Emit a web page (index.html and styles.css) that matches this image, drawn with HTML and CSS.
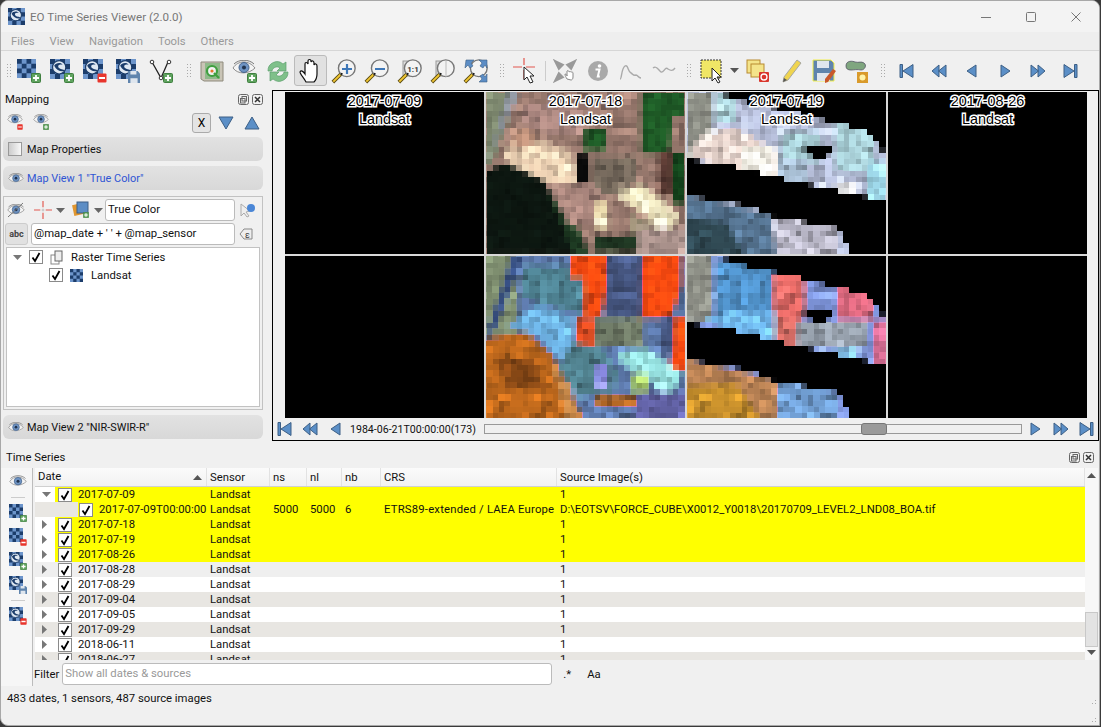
FILE: index.html
```html
<!DOCTYPE html>
<html>
  <head>
    <meta charset="utf-8" />
    <title>EO Time Series Viewer (2.0.0)</title>
    <link rel="stylesheet" href="styles.css">
  </head>
  <body>
    <svg class="defs" width="0" height="0">
      <defs>
        <filter id="px" filterUnits="userSpaceOnUse" x="-10" y="-10" width="219" height="182" color-interpolation-filters="sRGB">
          <feTurbulence type="fractalNoise" baseFrequency=".11" numOctaves="2" seed="4"/>
          <feColorMatrix values=".33 .33 .33 0 0 .33 .33 .33 0 0 .33 .33 .33 0 0 0 0 0 0 1" result="n"/>
          <feComposite in="SourceGraphic" in2="n" operator="arithmetic" k1="2"/>
          <feGaussianBlur stdDeviation="1.800" result="m"/>
          <feFlood x="3" y="3" width="1" height="1" flood-color="#000"/>
          <feComposite width="6" height="6"/>
          <feTile result="a"/>
          <feComposite in="m" in2="a" operator="in"/>
          <feMorphology operator="dilate" radius="3"/>
        </filter>
        <filter id="swath" filterUnits="userSpaceOnUse" x="0" y="0" width="199" height="162">
          <feFlood x="3" y="3" width="1" height="1" flood-color="#000"/>
          <feComposite width="6" height="6"/>
          <feTile result="a"/>
          <feComposite in="SourceGraphic" in2="a" operator="in"/>
          <feMorphology operator="dilate" radius="3"/>
        </filter>

        <symbol id="checker" viewBox="0 0 24 24">
          <rect width="24" height="24" fill="#6d95cb"/>
          <path fill="#1c3d6b" d="M0 0h6v6H0zM12 0h6v6h-6zM6 6h6v6H6zM18 6h6v6h-6zM0 12h6v6H0zM12 12h6v6h-6zM6 18h6v6H6zM18 18h6v6h-6z"/>
        </symbol>
        <symbol id="plus" viewBox="0 0 10 10">
          <rect x=".5" y=".5" width="9" height="9" rx="1" fill="#5fa35f" stroke="#3f7f3f"/>
          <path d="M5 2v6M2 5h6" stroke="#fff" stroke-width="1.8"/>
        </symbol>
        <symbol id="minus" viewBox="0 0 10 10">
          <rect x=".5" y=".5" width="9" height="9" rx="1" fill="#e8352c"/>
          <path d="M2 5h6" stroke="#fff" stroke-width="2"/>
        </symbol>
        <symbol id="floppy" viewBox="0 0 10 10">
          <path d="M0 0h8l2 2v8H0z" fill="#5f84ad"/>
          <path d="M2 0h5v3H2zM2 6h6v4H2z" fill="#dfe6ee"/>
        </symbol>
        <symbol id="ts" viewBox="0 0 24 24">
          <use href="#checker" width="24" height="24"/>
          <circle cx="11" cy="10" r="8" fill="#dfe8f2" stroke="#1c3d6b" stroke-width="1.5"/>
          <path d="M5 8c2-4 9-4 10-1-3-1-6 0-5 3 2 3 6 2 8 4-4 2-10 0-13-6z" fill="#1c3d6b"/>
        </symbol>
        <symbol id="eye" viewBox="0 0 24 16">
          <path d="M1 8c5-8 16-8 22 0-6 6-17 7-22 0z" fill="#f4f4f4" stroke="#8b8b8b"/>
          <circle cx="12" cy="7.500" r="5" fill="#6f94c4" stroke="#46648c"/>
          <circle cx="12" cy="7.500" r="2" fill="#22344e"/>
          <path d="M2 4C7-1 17-1 22 4" fill="none" stroke="#777"/>
        </symbol>
        <symbol id="mag" viewBox="0 0 28 28">
          <path d="M2 26l9-9" stroke="#5a4a10" stroke-width="4"/>
          <path d="M2.500 25.500l8-8" stroke="#f2c733" stroke-width="2"/>
          <circle cx="17" cy="11" r="9" fill="#f3f3f3" stroke="#777" stroke-width="1.500"/>
          <path d="M10 19l1-3 2 1z" fill="#111"/>
        </symbol>
        <symbol id="first" viewBox="0 0 16 16">
          <path d="M2 1.500h2.500v13H2zM15 1.500v13L5 8z" fill="#5b8fc7" stroke="#3d5f85" stroke-linejoin="round"/>
        </symbol>
        <symbol id="rew" viewBox="0 0 16 16">
          <path d="M8 2v12L1 8zM15 2v12L7.500 8z" fill="#5b8fc7" stroke="#3d5f85" stroke-linejoin="round"/>
        </symbol>
        <symbol id="prev" viewBox="0 0 16 16">
          <path d="M12 2v12L3 8z" fill="#5b8fc7" stroke="#3d5f85" stroke-linejoin="round"/>
        </symbol>
        <symbol id="next" viewBox="0 0 16 16">
          <path d="M4 2v12l9-6z" fill="#5b8fc7" stroke="#3d5f85" stroke-linejoin="round"/>
        </symbol>
        <symbol id="ffw" viewBox="0 0 16 16">
          <path d="M8 2v12l7-6zM1 2v12l7.500-6z" fill="#5b8fc7" stroke="#3d5f85" stroke-linejoin="round"/>
        </symbol>
        <symbol id="last" viewBox="0 0 16 16">
          <path d="M11.500 1.500H14v13h-2.500zM1 1.500v13L11 8z" fill="#5b8fc7" stroke="#3d5f85" stroke-linejoin="round"/>
        </symbol>
        <symbol id="check" viewBox="0 0 14 14">
          <rect x=".5" y=".5" width="13" height="13" fill="#fff" stroke="#8a8a8a"/>
          <path d="M3.500 7.500l2.500 3.500 4.500-8" fill="none" stroke="#000" stroke-width="1.800"/>
        </symbol>
        <symbol id="float" viewBox="0 0 11 11">
          <rect x=".5" y=".5" width="10" height="10" rx="2" fill="#f0f0f0" stroke="#666"/>
          <rect x="4" y="2.500" width="4.500" height="4.500" fill="none" stroke="#666"/>
          <rect x="2.500" y="4.500" width="4.500" height="4.500" fill="none" stroke="#666"/>
        </symbol>
        <symbol id="close" viewBox="0 0 11 11">
          <rect x=".5" y=".5" width="10" height="10" rx="2" fill="#f0f0f0" stroke="#666"/>
          <path d="M3 3l5 5M8 3l-5 5" stroke="#333" stroke-width="1.500"/>
        </symbol>
        <symbol id="cross" viewBox="0 0 20 20">
          <path d="M0 10h7M13 10h7M10 0v7M10 13v7" stroke="#e2564e" stroke-width="1.300"/>
          <path d="M8.500 10h3M10 8.500v3" stroke="#bbb"/>
        </symbol>
      </defs>
    </svg>

    <div class="window">
      <div class="titlebar">
        <svg class="app-icon" width="17" height="17"><use href="#ts" width="17" height="17"/></svg>
        <span class="app-title">EO Time Series Viewer (2.0.0)</span>
        <div class="win-controls">
          <svg width="12" height="12"><path d="M1 6.500h10" stroke="#777"/></svg>
          <svg width="12" height="12"><rect x="1.500" y="1.500" width="9" height="9" rx="1" fill="none" stroke="#777"/></svg>
          <svg width="12" height="12"><path d="M1.500 1.500l9 9M10.500 1.500l-9 9" stroke="#777"/></svg>
        </div>
      </div>

      <div class="menubar">
        <span>Files</span><span>View</span><span>Navigation</span><span>Tools</span><span>Others</span>
      </div>

      <div class="toolbar">
        <i class="grip first-grip"></i>
        <button class="tool"><svg width="26" height="26"><use href="#checker" x="1" y="1" width="19" height="19"/><use href="#plus" x="15" y="15" width="10" height="10"/></svg></button>
        <button class="tool"><svg width="26" height="26"><use href="#ts" x="1" y="1" width="20" height="20"/><use href="#plus" x="15" y="15" width="10" height="10"/></svg></button>
        <button class="tool"><svg width="26" height="26"><use href="#ts" x="1" y="1" width="20" height="20"/><use href="#minus" x="15" y="15" width="10" height="10"/></svg></button>
        <button class="tool"><svg width="26" height="26"><use href="#ts" x="1" y="1" width="20" height="20"/><use href="#floppy" x="13" y="13" width="12" height="12"/></svg></button>
        <button class="tool"><svg width="26" height="26"><path d="M4 4l9 16 7-16" fill="none" stroke="#222" stroke-width="1.300"/><circle cx="4" cy="4" r="1.800" fill="#fff" stroke="#333"/><circle cx="21" cy="4" r="1.800" fill="#fff" stroke="#333"/><circle cx="13" cy="20" r="1.800" fill="#fff" stroke="#333"/><use href="#plus" x="15" y="15" width="10" height="10"/></svg></button>
        <i class="grip qgis-grip"></i>
        <button class="tool"><svg width="26" height="26"><path d="M2 4h22v19H5l-3-2z" fill="#c9c4b6" stroke="#8e8a7c"/><rect x="6" y="5" width="15" height="16" fill="#8fb98a"/><circle cx="13" cy="13" r="5" fill="#f2f2f2" stroke="#3f9f3f" stroke-width="2.200"/><circle cx="13" cy="13" r="1.600" fill="#e5772b"/><path d="M15 15l5 5" stroke="#3f9f3f" stroke-width="2.200"/></svg></button>
        <button class="tool"><svg width="26" height="26"><use href="#eye" x="0" y="2" width="24" height="16"/><use href="#plus" x="15" y="15" width="10" height="10"/></svg></button>
        <button class="tool"><svg width="26" height="26"><path d="M3 13a9 9 0 0 1 15-7l3-2v9h-9l3-3a5 5 0 0 0-8 3z" fill="#7fc08a" stroke="#5d9f6d" stroke-width=".7"/><path d="M23 14a9 9 0 0 1-15 7l-3 2v-9h9l-3 3a5 5 0 0 0 8-3z" fill="#7fc08a" stroke="#5d9f6d" stroke-width=".7"/></svg></button>
        <button class="tool active"><svg width="26" height="26"><path d="M8 24c-2-4-6-8-6-10 1-2 3-1 5 2V6c0-2 2-2 3 0V3c0-2 3-2 3 0v1c1-2 3-1 3 1v2c1-2 3-1 3 1v8c0 4-1 6-3 8z" fill="#fff" stroke="#111" stroke-width="1.200"/></svg></button>
        <button class="tool"><svg width="26" height="26"><use href="#mag" width="26" height="26"/><path d="M16 6v10M11 11h10" stroke="#3f78b8" stroke-width="2.200"/></svg></button>
        <button class="tool"><svg width="26" height="26"><use href="#mag" width="26" height="26"/><path d="M11 11h10" stroke="#3f78b8" stroke-width="2.200"/></svg></button>
        <button class="tool"><svg width="26" height="26"><rect x="6" y="3" width="13" height="15" fill="#ddd" stroke="#999"/><use href="#mag" width="26" height="26"/><text x="16" y="14" class="one-one">1:1</text></svg></button>
        <button class="tool"><svg width="26" height="26"><rect x="6" y="3" width="13" height="15" fill="#ddd" stroke="#999"/><use href="#mag" width="26" height="26"/><path d="M16 3v16" stroke="#bbb"/></svg></button>
        <button class="tool"><svg width="26" height="26"><use href="#mag" width="26" height="26"/><path d="M3 2h8L8 5l2 3-3 2-2-3-3 3zM24 2h-8l3 3-2 3 3 2 2-3 2 3zM24 24h-8l3-3-2-3 3-2 2 3 2-3z" fill="#5c8dc5" stroke="#3d5f85" stroke-width=".6"/></svg></button>
        <i class="grip select-grip"></i>
        <button class="tool"><svg width="26" height="26"><path d="M1 9h9M14 9h9M12 0v7M12 12v9" stroke="#e2564e" stroke-width="1.200"/><path d="M12 9v13l3-3 3 6 3-1-3-6h4z" fill="#fff" stroke="#222"/></svg></button>
        <i class="divider"></i>
        <button class="tool"><svg width="24" height="24"><path d="M3 3l6 3-3 3zM21 3l-6 3 3 3zM3 21l6-3-3-3z" fill="#999" stroke="#999" stroke-width="3"/><path d="M14 20c-1-2-2-3-2-5 1 0 2 1 2 2v-5c1-1 2 0 2 1 1-1 2 0 2 0 1 0 2 0 2 1v4c0 2-1 3-2 3z" fill="#fff" stroke="#888"/></svg></button>
        <button class="tool"><svg width="22" height="22"><circle cx="11" cy="11" r="10" fill="#a9a9a9"/><circle cx="12.500" cy="6" r="1.800" fill="#fff"/><path d="M8.500 9.500h4l-1.700 7h2" fill="none" stroke="#fff" stroke-width="2"/></svg></button>
        <button class="tool"><svg width="24" height="20"><path d="M1 18c2 0 1-10 5-13 3-2 3 6 6 7 2 1 2 3 5 2 2 0 2 3 5 3" fill="none" stroke="#aaa" stroke-width="1.400"/></svg></button>
        <button class="tool"><svg width="24" height="14"><path d="M1 4c4-3 5 2 8 4 3 1 4-6 7-3 3 2 5 2 7-1" fill="none" stroke="#aaa" stroke-width="1.400"/></svg></button>
        <i class="grip feature-grip"></i>
        <button class="tool"><svg width="26" height="26"><rect x="2" y="2" width="20" height="18" fill="#f0e666" stroke="#333" stroke-dasharray="2 1"/><path d="M13 10v13l3-3 3 5 2-1-3-5h4z" fill="#fff" stroke="#222"/></svg></button>
        <button class="dropdown"><svg width="9" height="5"><path d="M0 0h9L4.500 5z" fill="#555"/></svg></button>
        <button class="tool"><svg width="26" height="26"><rect x="2" y="2" width="13" height="13" fill="#f4e48a" stroke="#b88a30"/><rect x="6" y="6" width="13" height="13" fill="#f4e48a" stroke="#b88a30"/><rect x="14" y="14" width="10" height="10" rx="1" fill="#d9362c"/><circle cx="19" cy="19" r="3" fill="none" stroke="#fff" stroke-width="1.300"/></svg></button>
        <button class="tool"><svg width="26" height="26"><path d="M19 2l4 3-13 17-5 2 1-5z" fill="#efd44f" stroke="#a8a8a0"/><path d="M5 24l1-4 3 2z" fill="#555"/></svg></button>
        <button class="tool"><svg width="26" height="26"><path d="M2 2h18l3 3v18H2z" fill="#5f84ad" stroke="#f2ee4a"/><path d="M6 3h12v7H6zM6 15h13v8H6z" fill="#dfe6ee"/><path d="M22 11l3 2-8 11-3 1 0-4z" fill="#c9582b"/></svg></button>
        <button class="tool"><svg width="26" height="26"><path d="M2 8c0-6 7-5 9-4 4 1 6-1 9 1 3 2 1 7-3 7-4-1-7 0-10 0-3 0-5-1-5-4z" fill="#7fa67f" stroke="#556" stroke-width=".8"/><rect x="13" y="14" width="11" height="11" fill="#d99a2b"/><circle cx="18.500" cy="19.500" r="3" fill="#fff3a8"/></svg></button>
        <i class="grip nav-grip"></i>
        <button class="tool"><svg width="16" height="16"><use href="#first" width="16" height="16"/></svg></button>
        <button class="tool"><svg width="16" height="16"><use href="#rew" width="16" height="16"/></svg></button>
        <button class="tool"><svg width="16" height="16"><use href="#prev" width="16" height="16"/></svg></button>
        <button class="tool"><svg width="16" height="16"><use href="#next" width="16" height="16"/></svg></button>
        <button class="tool"><svg width="16" height="16"><use href="#ffw" width="16" height="16"/></svg></button>
        <button class="tool"><svg width="16" height="16"><use href="#last" width="16" height="16"/></svg></button>
      </div>

      <div class="upper">
        <div class="mapping">
          <div class="dock-title">
            <span>Mapping</span>
            <span class="dock-btns">
              <svg width="11" height="11"><use href="#float" width="11" height="11"/></svg>
              <svg width="11" height="11"><use href="#close" width="11" height="11"/></svg>
            </span>
          </div>
          <div class="mapping-tools">
            <svg class="mini" width="20" height="20"><use href="#eye" x="1" y="1" width="16" height="11"/><use href="#minus" x="11" y="11" width="6" height="6"/></svg>
            <svg class="mini second" width="20" height="20"><use href="#eye" x="1" y="1" width="16" height="11"/><use href="#plus" x="11" y="11" width="6" height="6"/></svg>
            <button class="x-btn">X</button>
            <svg width="16" height="14"><path d="M1 1h14L8 13z" fill="#5b8fc7" stroke="#3d5f85"/></svg>
            <svg width="16" height="14"><path d="M1 13h14L8 1z" fill="#5b8fc7" stroke="#3d5f85"/></svg>
          </div>

          <div class="section">
            <i class="section-box"></i>
            <span>Map Properties</span>
          </div>
          <div class="section">
            <svg width="16" height="11"><use href="#eye" width="16" height="11"/></svg>
            <span class="section-link">Map View 1 "True Color"</span>
          </div>

          <div class="view-frame">
            <div class="view-row">
              <svg width="18" height="16"><use href="#eye" y="2" width="18" height="12"/><path d="M1 15L16 1" stroke="#777"/></svg>
              <svg class="row-cross" width="18" height="18"><use href="#cross" width="18" height="18"/></svg>
              <svg width="9" height="5"><path d="M0 0h9L4.500 5z" fill="#666"/></svg>
              <svg class="row-layers" width="18" height="18"><rect x="1" y="3" width="10" height="11" fill="#e0962f" transform="rotate(-12 6 8)"/><rect x="5" y="1" width="11" height="11" fill="#5c8dc5" stroke="#3d5f85"/><use href="#plus" x="11" y="11" width="6" height="6"/></svg>
              <svg width="9" height="5"><path d="M0 0h9L4.500 5z" fill="#666"/></svg>
              <div class="line-input name-input">True Color</div>
              <svg class="row-end" width="16" height="16"><path d="M1 2v12l3-3 3 4 2-1-3-4 4-1z" fill="#eee" stroke="#aaa"/><circle cx="11" cy="6" r="4" fill="#4a86d6"/></svg>
            </div>
            <div class="view-row">
              <button class="abc">abc</button>
              <div class="line-input expr-input">@map_date + ' ' + @map_sensor</div>
              <svg class="row-end expr-end" width="14" height="14"><path d="M1 7l4-5h8v10H5z" fill="#eee" stroke="#888"/><text x="6" y="11" class="epsilon">ε</text></svg>
            </div>
            <div class="layer-tree">
              <div class="tree-row">
                <svg class="arrow" width="9" height="5"><path d="M0 0h9L4.500 5z" fill="#777"/></svg>
                <svg width="14" height="14"><use href="#check" width="14" height="14"/></svg>
                <svg class="tree-icon" width="15" height="15"><rect x="1" y="5" width="8" height="9" fill="none" stroke="#888"/><rect x="5" y="1" width="7" height="10" fill="#eee" stroke="#666"/></svg>
                <span>Raster Time Series</span>
              </div>
              <div class="tree-row sub">
                <svg width="14" height="14"><use href="#check" width="14" height="14"/></svg>
                <svg class="tree-icon" width="13" height="13"><use href="#checker" width="13" height="13"/></svg>
                <span>Landsat</span>
              </div>
            </div>
          </div>

          <div class="section">
            <svg width="16" height="11"><use href="#eye" width="16" height="11"/></svg>
            <span>Map View 2 "NIR-SWIR-R"</span>
          </div>
        </div>

        <div class="maps">
          <div class="map-grid">
            <div class="map-cell">
              <div class="map-label">2017-07-09<br>Landsat</div>
            </div>
            <div class="map-cell">
              <svg width="199" height="162">
                <g filter="url(#px)">
                  <rect x="-10" y="-10" width="219" height="182" fill="#96776c"/>
                  <path fill="#7f8a70" d="M0 0h22v30L6 72H0z"/>
                  <path fill="#8f96a0" d="M22 0h12L12 45 2 72z"/>
                  <path fill="#a6837c" d="M38 12h60v30H62L36 30z"/>
                  <path fill="#0c1610" d="M0 78l20-7 35 14 15 20 12 20 8 37H0z"/>
                  <path fill="#1d3a22" d="M62 100l16 6 10 20 16 36H88z"/>
                  <path fill="#efd2b4" d="M18 62l14-22 26 10 28 10 4 34H72L26 74z"/>
                  <path fill="#c5967e" d="M26 40l16-4 12 14-26 8z"/>
                  <path fill="#1e5a26" d="M155 0h44v24h-12l-4 38h-28zM98 36h22v22H98z"/>
                  <path fill="#12401a" d="M186 60h13v52h-13z"/>
                  <path fill="#5b3b34" d="M172 60h14v44h-14z"/>
                  <path fill="#0a0a0a" d="M90 62h14v30H90z"/>
                  <path fill="#75695c" d="M106 64h46v24l-22 16h-24z"/>
                  <path fill="#a9857c" d="M60 92h46l24 26-10 16H84z"/>
                  <path fill="#fff3c8" d="M134 100l22-8 36 32-8 18-10 4-12-22-28-18z"/>
                  <path fill="#f7e4b4" d="M110 110h12v26h-12z"/>
                  <path fill="#b0a487" d="M146 122l20 10-4 20h-16z"/>
                  <path fill="#1d3320" d="M108 144h44v16h-44z"/>
                  <path fill="#a8908a" d="M152 136h47v26h-47z"/>
                </g>
              </svg>
              <div class="map-label">2017-07-18<br>Landsat</div>
            </div>
            <div class="map-cell">
              <svg width="199" height="162">
                <g filter="url(#px)">
                  <rect x="-10" y="-10" width="219" height="182" fill="#b3bbd6"/>
                  <path fill="#8f9188" d="M0 0h26v66H0z"/>
                  <path fill="#a9d0d8" d="M28 0h20v30H28zM94 40h40v30H94zM148 30h40v50h-40z"/>
                  <path fill="#e9d5cd" d="M20 40l30-4 40 24 4 30-60-14-34-14z"/>
                  <path fill="#fbf6ea" d="M54 54h34v30H54z"/>
                  <path fill="#a7bdd2" d="M90 66h30v24H90z"/>
                  <path fill="#fff" d="M148 92h22v10h-22z"/>
                  <path fill="#9dd6e8" d="M180 70h19v40h-19z"/>
                  <path fill="#54728f" d="M-10 100l100 24 60 12v36H-10z"/>
                  <path fill="#2e4650" d="M-10 125l50 5 22 42H-10z"/>
                  <path fill="#b8b6c6" d="M84 120l30 4 36 10v38h-60z"/>
                </g>
                <g filter="url(#swath)">
                  <path d="M28 0l32 10 40 8 46 12 31 7 13 13 9 13V0zM0 68l40 5 45 12 60 13 54 12v52h-36l-8-25-17-4-48-8-30-12-60-10zM115 58l30-6-5 13h-12l-13-5z"/>
                </g>
              </svg>
              <div class="map-label">2017-07-19<br>Landsat</div>
            </div>
            <div class="map-cell">
              <div class="map-label">2017-08-26<br>Landsat</div>
            </div>

            <div class="map-cell"></div>
            <div class="map-cell">
              <svg width="199" height="162">
                <g filter="url(#px)">
                  <rect x="-10" y="-10" width="219" height="182" fill="#5b77a8"/>
                  <path fill="#7f8f70" d="M-10-10h42v88H-10z"/>
                  <path fill="#354d80" d="M26 0h12L10 72 0 78z"/>
                  <path fill="#4d8090" d="M36 10h60l6 50-44-12-22-8z"/>
                  <path fill="#6db1e2" d="M52 48l36 14-2 38H70L54 80 22 70z"/>
                  <path fill="#b9651b" d="M-10 84l50-8 25 22 10 17 26 57H-10z"/>
                  <path fill="#8b4a16" d="M10 100l40 4 10 30H20z"/>
                  <path fill="#c98a4a" d="M64 104l18 20 12 38H80z"/>
                  <path fill="#ff4a10" d="M86-10h34v40l-4 30H98V22H84zM158-10h37v40l-10 32h-32l2-36z"/>
                  <path fill="#dc4a20" d="M90 62h18v28H90z"/>
                  <path fill="#ff4a10" d="M188 62h21v54l-26-4 4-18z"/>
                  <path fill="#45557f" d="M120-10h36v70h-36zM176 60h12v34h-12z"/>
                  <path fill="#4f7f8c" d="M86 86l30 6 16 24-4 20-36 6-20-30z"/>
                  <path fill="#6f7a66" d="M108 62h50v28h-50z"/>
                  <path fill="#9ae7e6" d="M132 96l28-4 36 26-14 28-18-22-28-16z"/>
                  <path fill="#8d8de8" d="M110 108h12v26h-12z"/>
                  <path fill="#a9cf6a" d="M146 118h16v18h-16z"/>
                  <path fill="#5f5fa0" d="M148 136h61v36h-61z"/>
                  <path fill="#b86820" d="M110 140h40v10h-40z"/>
                </g>
              </svg>
            </div>
            <div class="map-cell">
              <svg width="199" height="162">
                <g filter="url(#px)">
                  <rect x="-10" y="-10" width="219" height="182" fill="#7f96dd"/>
                  <path fill="#8f9188" d="M-10-10h36v76h-36z"/>
                  <path fill="#4f8fc6" d="M28 4h60v56H28z"/>
                  <path fill="#e56a66" d="M86 18h32v44l-16 8H86z"/>
                  <path fill="#df6a80" d="M150 30h36v34h-36z"/>
                  <path fill="#71baf4" d="M40 56h48v30l-40-10-30-12z"/>
                  <path fill="#d06a62" d="M88 64h24v26H88z"/>
                  <path fill="#96a0ac" d="M110 66h70v26h-70z"/>
                  <path fill="#cf6a8f" d="M186 64h23v46h-23z"/>
                  <path fill="#88c8f8" d="M148 92h22v12h-22z"/>
                  <path fill="#b57f52" d="M-10 100l100 24v48H-10z"/>
                  <path fill="#c08a2a" d="M-10 130l60-2 30 44H-10z"/>
                  <path fill="#6f9cd0" d="M90 124l60 12v36H90z"/>
                </g>
                <g filter="url(#swath)">
                  <path d="M28 0l32 10 40 8 46 12 31 7 13 13 9 13V0zM0 68l40 5 45 12 60 13 54 12v52h-36l-8-25-17-4-48-8-30-12-60-10zM115 58l30-6-5 13h-12l-13-5z"/>
                </g>
              </svg>
            </div>
            <div class="map-cell"></div>
          </div>
          <div class="map-nav">
            <svg width="16" height="16"><use href="#first" width="16" height="16"/></svg>
            <svg width="16" height="16"><use href="#rew" width="16" height="16"/></svg>
            <svg width="16" height="16"><use href="#prev" width="16" height="16"/></svg>
            <span class="nav-date">1984-06-21T00:00:00(173)</span>
            <div class="slider"><i class="slider-thumb"></i></div>
            <svg class="nav-next" width="16" height="16"><use href="#next" width="16" height="16"/></svg>
            <svg width="16" height="16"><use href="#ffw" width="16" height="16"/></svg>
            <svg width="16" height="16"><use href="#last" width="16" height="16"/></svg>
          </div>
        </div>
      </div>

      <div class="lower">
        <div class="dock-title ts-title">
          <span>Time Series</span>
          <span class="dock-btns">
            <svg width="11" height="11"><use href="#float" width="11" height="11"/></svg>
            <svg width="11" height="11"><use href="#close" width="11" height="11"/></svg>
          </span>
        </div>
        <div class="ts-body">
          <div class="ts-tools">
            <svg width="18" height="13"><use href="#eye" width="18" height="13"/></svg>
            <hr class="first-rule">
            <svg width="18" height="18"><use href="#checker" width="14" height="14"/><use href="#plus" x="11" y="11" width="7" height="7"/></svg>
            <svg width="18" height="18"><use href="#checker" width="14" height="14"/><use href="#minus" x="11" y="11" width="7" height="7"/></svg>
            <svg width="18" height="18"><use href="#ts" width="14" height="14"/><use href="#plus" x="11" y="11" width="7" height="7"/></svg>
            <svg width="18" height="18"><use href="#ts" width="14" height="14"/><use href="#floppy" x="10" y="10" width="8" height="8"/></svg>
            <hr>
            <svg width="18" height="18"><use href="#ts" width="14" height="14"/><use href="#minus" x="11" y="11" width="7" height="7"/></svg>
          </div>
          <div class="ts-main">
            <div class="table-wrap">
              <div class="table">
                <div class="row head">
                  <div class="date-head">Date<svg width="9" height="5"><path d="M0 5h9L4.500 0z" fill="#555"/></svg></div>
                  <div>Sensor</div><div>ns</div><div>nl</div><div>nb</div><div>CRS</div><div>Source Image(s)</div>
                </div>
                <div class="row hit">
                  <div class="date"><svg class="arrow" width="9" height="5"><path d="M0 0h9L4.500 5z" fill="#777"/></svg><svg width="14" height="14"><use href="#check" width="14" height="14"/></svg><span>2017-07-09</span></div>
                  <div>Landsat</div><div></div><div></div><div></div><div></div><div>1</div>
                </div>
                <div class="row hit child">
                  <div class="date"><svg width="14" height="14"><use href="#check" width="14" height="14"/></svg><span>2017-07-09T00:00:00</span></div>
                  <div>Landsat</div><div>5000</div><div>5000</div><div>6</div><div class="crs">ETRS89-extended / LAEA Europe</div><div>D:\EOTSV\FORCE_CUBE\X0012_Y0018\20170709_LEVEL2_LND08_BOA.tif</div>
                </div>
                <div class="row hit">
                  <div class="date"><svg class="arrow" width="5" height="9"><path d="M0 0v9l5-4.500z" fill="#777"/></svg><svg width="14" height="14"><use href="#check" width="14" height="14"/></svg><span>2017-07-18</span></div>
                  <div>Landsat</div><div></div><div></div><div></div><div></div><div>1</div>
                </div>
                <div class="row hit">
                  <div class="date"><svg class="arrow" width="5" height="9"><path d="M0 0v9l5-4.500z" fill="#777"/></svg><svg width="14" height="14"><use href="#check" width="14" height="14"/></svg><span>2017-07-19</span></div>
                  <div>Landsat</div><div></div><div></div><div></div><div></div><div>1</div>
                </div>
                <div class="row hit">
                  <div class="date"><svg class="arrow" width="5" height="9"><path d="M0 0v9l5-4.500z" fill="#777"/></svg><svg width="14" height="14"><use href="#check" width="14" height="14"/></svg><span>2017-08-26</span></div>
                  <div>Landsat</div><div></div><div></div><div></div><div></div><div>1</div>
                </div>
                <div class="row pale">
                  <div class="date"><svg class="arrow" width="5" height="9"><path d="M0 0v9l5-4.500z" fill="#777"/></svg><svg width="14" height="14"><use href="#check" width="14" height="14"/></svg><span>2017-08-28</span></div>
                  <div>Landsat</div><div></div><div></div><div></div><div></div><div>1</div>
                </div>
                <div class="row">
                  <div class="date"><svg class="arrow" width="5" height="9"><path d="M0 0v9l5-4.500z" fill="#777"/></svg><svg width="14" height="14"><use href="#check" width="14" height="14"/></svg><span>2017-08-29</span></div>
                  <div>Landsat</div><div></div><div></div><div></div><div></div><div>1</div>
                </div>
                <div class="row alt">
                  <div class="date"><svg class="arrow" width="5" height="9"><path d="M0 0v9l5-4.500z" fill="#777"/></svg><svg width="14" height="14"><use href="#check" width="14" height="14"/></svg><span>2017-09-04</span></div>
                  <div>Landsat</div><div></div><div></div><div></div><div></div><div>1</div>
                </div>
                <div class="row">
                  <div class="date"><svg class="arrow" width="5" height="9"><path d="M0 0v9l5-4.500z" fill="#777"/></svg><svg width="14" height="14"><use href="#check" width="14" height="14"/></svg><span>2017-09-05</span></div>
                  <div>Landsat</div><div></div><div></div><div></div><div></div><div>1</div>
                </div>
                <div class="row alt">
                  <div class="date"><svg class="arrow" width="5" height="9"><path d="M0 0v9l5-4.500z" fill="#777"/></svg><svg width="14" height="14"><use href="#check" width="14" height="14"/></svg><span>2017-09-29</span></div>
                  <div>Landsat</div><div></div><div></div><div></div><div></div><div>1</div>
                </div>
                <div class="row">
                  <div class="date"><svg class="arrow" width="5" height="9"><path d="M0 0v9l5-4.500z" fill="#777"/></svg><svg width="14" height="14"><use href="#check" width="14" height="14"/></svg><span>2018-06-11</span></div>
                  <div>Landsat</div><div></div><div></div><div></div><div></div><div>1</div>
                </div>
                <div class="row alt">
                  <div class="date"><svg class="arrow" width="5" height="9"><path d="M0 0v9l5-4.500z" fill="#777"/></svg><svg width="14" height="14"><use href="#check" width="14" height="14"/></svg><span>2018-06-27</span></div>
                  <div>Landsat</div><div></div><div></div><div></div><div></div><div>1</div>
                </div>
              </div>
              <div class="scrollbar">
                <svg width="9" height="5"><path d="M0 5h9L4.500 0z" fill="#555"/></svg>
                <div class="scroll-track"><i class="scroll-thumb"></i></div>
                <svg width="9" height="5"><path d="M0 0h9L4.500 5z" fill="#555"/></svg>
              </div>
            </div>
            <div class="filter-row">
              <span>Filter</span>
              <div class="line-input filter-input">Show all dates &amp; sources</div>
              <span class="regex">.*</span>
              <span class="case">Aa</span>
            </div>
          </div>
        </div>
        <div class="statusbar">
          <span>483 dates, 1 sensors, 487 source images</span>
          <div class="size-grips"><i></i><i></i></div>
        </div>
      </div>
    </div>
  </body>
</html>
```

FILE: styles.css
```css
* {
  box-sizing: border-box;
  font-family: "Roboto", "Liberation Sans", sans-serif;
}
html,
body {
  margin: 0;
  height: 100%;
  overflow: hidden;
  background-color: #3a3a3a;
}
svg {
  display: block;
  flex: none;
}
.defs {
  position: absolute;
}
button {
  padding: 0;
  margin: 0;
  border: none;
  background: none;
}
.window {
  display: flex;
  flex-direction: column;
  width: 1100px;
  height: 726px;
  background-color: #f0f0f0;
  border: 1px solid #a8a8a8;
  border-top-left-radius: 8px;
  border-top-right-radius: 8px;
  border-bottom-left-radius: 8px;
  font-size: 11.3px;
  color: #111;
  overflow: hidden;
}

/* title and menu */
.titlebar {
  display: flex;
  align-items: center;
  height: 31px;
  padding-left: 7px;
  background-color: #f3f3f3;
}
.app-title {
  margin-left: 5px;
  color: #777;
  font-size: 11.6px;
}
.win-controls {
  display: flex;
  gap: 33px;
  margin-left: auto;
  padding-right: 17px;
}
.menubar {
  display: flex;
  align-items: center;
  gap: 15px;
  height: 18px;
  padding-left: 10px;
  background-color: #eeeeee;
  color: #999;
}

/* main toolbar */
.toolbar {
  display: flex;
  align-items: center;
  height: 40px;
  padding-left: 5px;
  background-color: #f0f0f0;
  border-top: 1px solid #d6d6d6;
}
.tool {
  display: flex;
  align-items: center;
  justify-content: center;
  flex: none;
  width: 33px;
  height: 31px;
}
.tool.active {
  background-color: #e1e1e1;
  border: 1px solid #bbb;
  border-radius: 3px;
}
.dropdown {
  display: flex;
  align-items: center;
  justify-content: center;
  width: 13px;
  height: 31px;
}
.grip {
  flex: none;
  width: 6px;
  height: 16px;
  background-image: radial-gradient(#aaa 40%, transparent 45%);
  background-size: 3px 3px;
  margin-right: 3px;
}
.first-grip {
  margin-right: 0;
}
.qgis-grip {
  margin-left: 9px;
}
.select-grip {
  margin-left: 7px;
}
.feature-grip {
  margin-left: 6px;
}
.nav-grip {
  margin-left: 7px;
}
.divider {
  flex: none;
  width: 1px;
  height: 20px;
  margin-left: 4px;
  margin-right: 2px;
  background-color: #ccc;
}
.one-one {
  font-size: 8px;
  font-weight: bold;
  text-anchor: middle;
  fill: #333;
}

/* upper half */
.upper {
  display: flex;
  flex: none;
  height: 351px;
}
.mapping {
  display: flex;
  flex: none;
  flex-direction: column;
  width: 271px;
  padding-left: 2px;
}
.dock-title {
  display: flex;
  flex: none;
  align-items: center;
  justify-content: space-between;
  height: 19px;
  padding: 0 3px 0 2px;
  margin-right: 6px;
}
.dock-btns {
  display: flex;
  gap: 3px;
}
.mapping-tools {
  display: flex;
  flex: none;
  align-items: center;
  height: 27px;
  padding-left: 3px;
  margin-right: 8px;
}
.mini {
  margin-right: 6px;
}
.second {
  margin-right: 140px;
}
.x-btn {
  width: 19px;
  height: 20px;
  margin-right: 7px;
  border: 1px solid #aaa;
  border-radius: 3px;
  background-color: #e4e4e4;
  font-size: 12px;
}
.mapping-tools svg:last-child {
  margin-left: 10px;
}
.section {
  display: flex;
  flex: none;
  align-items: center;
  gap: 3px;
  height: 24px;
  width: 260px;
  padding-left: 5px;
  margin-top: 1px;
  margin-bottom: 4px;
  border-radius: 6px;
  background: linear-gradient(#e2e2e2, #d8d8d8);
  font-size: 10.9px;
}
.section-box {
  flex: none;
  width: 14px;
  height: 14px;
  margin-right: 2px;
  border: 1px solid #999;
  background: linear-gradient(90deg, #ccc, #f8f8f8);
}
.section-link {
  color: #2f55d4;
}
.view-frame {
  display: flex;
  flex: none;
  flex-direction: column;
  width: 260px;
  height: 214px;
  border: 1px solid #c2c2c2;
  padding: 1px 2px;
  margin-top: 2px;
  margin-bottom: 4px;
}
.view-row {
  display: flex;
  flex: none;
  align-items: center;
  height: 24px;
  padding-left: 1px;
}
.row-cross {
  margin-left: 9px;
}
.view-row > svg:nth-child(3) {
  margin-left: 4px;
}
.row-layers {
  margin-left: 7px;
}
.view-row > svg:nth-child(5) {
  margin-left: 4px;
}
.line-input {
  height: 22px;
  line-height: 20px;
  padding-left: 2px;
  background-color: #fff;
  border: 1px solid #bbb;
  border-radius: 3px;
}
.name-input {
  width: 130px;
  margin-left: 2px;
}
.expr-input {
  width: 204px;
  margin-left: 3px;
}
.row-end {
  margin-left: 5px;
}
.expr-end {
  margin-left: 6px;
}
.abc {
  width: 23px;
  height: 22px;
  margin-left: -2px;
  border-radius: 3px;
  background-color: #e1e1e1;
  border: 1px solid #ccc;
  font-size: 9px;
  font-weight: bold;
  color: #444;
}
.epsilon {
  font-size: 9px;
  fill: #444;
}
.layer-tree {
  flex: 1;
  margin: 1px 0 1px 0;
  background-color: #fff;
  border: 1px solid #c2c2c2;
}
.tree-row {
  display: flex;
  align-items: center;
  height: 18px;
  padding-left: 6px;
}
.tree-row .arrow {
  margin-right: 7px;
}
.tree-icon {
  margin-left: 7px;
  margin-right: 6px;
}
.tree-row.sub {
  padding-left: 42px;
}
.sub .tree-icon {
  margin-right: 8px;
}

/* map canvas */
.maps {
  display: flex;
  flex-direction: column;
  flex: 1;
  min-width: 0;
  border: 1px solid #000;
  padding: 1px 12px 0;
  background-color: #f0f0f0;
}
.map-grid {
  display: grid;
  grid-template-columns: repeat(4, 199px);
  grid-template-rows: 162px 162px;
  gap: 2px;
  width: 802px;
  background-color: #d8d8d8;
}
.map-cell {
  position: relative;
  background-color: #000;
}
.map-label {
  position: absolute;
  top: 0;
  left: 0;
  right: 0;
  font-family: "Liberation Sans", sans-serif;
  font-size: 14.4px;
  line-height: 18px;
  text-align: center;
  color: #000;
  -webkit-text-stroke: 3px #fff;
  paint-order: stroke fill;
}
.map-nav {
  display: flex;
  align-items: center;
  flex: 1;
  margin-left: -9px;
  margin-right: -9px;
}
.map-nav svg {
  margin-right: 10px;
}
.map-nav svg:nth-of-type(n+4) {
  margin-right: 0;
  margin-left: 10px;
}
.map-nav svg.nav-next {
  margin-left: 5px;
}
.nav-date {
  flex: none;
  margin-left: -4px;
  width: 134px;
  font-size: 10.6px;
  white-space: nowrap;
}
.slider {
  position: relative;
  flex: none;
  width: 538px;
  height: 10px;
  border: 1px solid #999;
  background-color: #f0f0f0;
}
.slider-thumb {
  position: absolute;
  left: 376px;
  top: -2px;
  width: 26px;
  height: 12px;
  background-color: #9a9a9a;
  border: 1px solid #777;
  border-radius: 3px;
}

/* time series dock */
.lower {
  display: flex;
  flex-direction: column;
  flex: 1;
  min-height: 0;
}
.ts-title {
  margin-top: 6px;
  height: 21px;
  padding-left: 5px;
  padding-right: 3px;
  margin-right: 2px;
}
.ts-body {
  display: flex;
  flex: none;
  height: 218px;
}
.ts-tools {
  display: flex;
  flex-direction: column;
  align-items: center;
  gap: 6px;
  width: 32px;
  padding-top: 7px;
  padding-left: 2px;
  border-right: 1px solid #bcbcbc;
  background-color: #f6f6f6;
}
.ts-tools hr {
  width: 14px;
  margin: 0;
  border: none;
  border-top: 1px solid #ccc;
}
.ts-tools .first-rule {
  margin-top: 3px;
}
.ts-main {
  display: flex;
  flex-direction: column;
  flex: 1;
  min-width: 0;
  padding-left: 2px;
}
.table-wrap {
  display: flex;
  height: 192px;
  overflow: hidden;
}
.table {
  width: 1050px;
  overflow: hidden;
  background-color: #fff;
}
.row {
  display: grid;
  grid-template-columns: 172px 63px 37px 35px 39px 176px 1fr;
  height: 15px;
  line-height: 15px;
  white-space: nowrap;
}
.row > div {
  padding-left: 3px;
  overflow: hidden;
}
.head {
  height: 19px;
  line-height: 20px;
  background: linear-gradient(#fbfbfb, #f2f2f2);
  border-bottom: 1px solid #d0d0d0;
}
.head > div {
  border-right: 1px solid #e2e2e2;
}
.date-head {
  display: flex;
  align-items: center;
  justify-content: space-between;
  padding-right: 4px;
}
.date {
  display: flex;
  align-items: center;
  padding-left: 0 !important;
}
.date .arrow {
  margin-left: 7px;
  margin-right: 7px;
  width: 9px;
}
.date span {
  margin-left: 6px;
}
.crs {
  letter-spacing: .2px;
}
.hit {
  background: linear-gradient(90deg, #fff 20px, #ffff00 20px);
}
.hit.child {
  background: linear-gradient(90deg, #e9e7e3 43px, #ffff00 43px);
}
.child .date {
  padding-left: 44px !important;
}
.pale {
  background-color: #efefef;
}
.alt {
  background-color: #e8e6e2;
}
.scrollbar {
  display: flex;
  flex-direction: column;
  align-items: center;
  justify-content: space-between;
  flex: none;
  width: 13px;
  padding: 5px 0;
  background-color: #f7f7f7;
}
.scroll-track {
  position: relative;
  flex: 1;
  width: 100%;
  margin: 5px 0;
}
.scroll-thumb {
  position: absolute;
  left: 0;
  right: 0;
  top: 129px;
  height: 35px;
  background-color: #e3e3e3;
  border: 1px solid #c8c8c8;
}
.filter-row {
  display: flex;
  align-items: center;
  height: 26px;
  padding-top: 2px;
  margin-left: -1px;
}
.filter-input {
  width: 490px;
  margin-left: 3px;
  color: #999;
}
.regex {
  margin-left: 11px;
}
.case {
  margin-left: 16px;
}
.statusbar {
  display: flex;
  justify-content: space-between;
  flex: 1;
  padding: 6px 1px 0 6px;
}
.size-grips {
  display: flex;
  flex-direction: column;
  gap: 8px;
  margin-top: 4px;
}
.size-grips i {
  width: 10px;
  height: 10px;
  background-image: radial-gradient(#aaa 40%, transparent 45%);
  background-size: 3px 3px;
  clip-path: polygon(100% 0, 100% 100%, 0 100%);
}
```
